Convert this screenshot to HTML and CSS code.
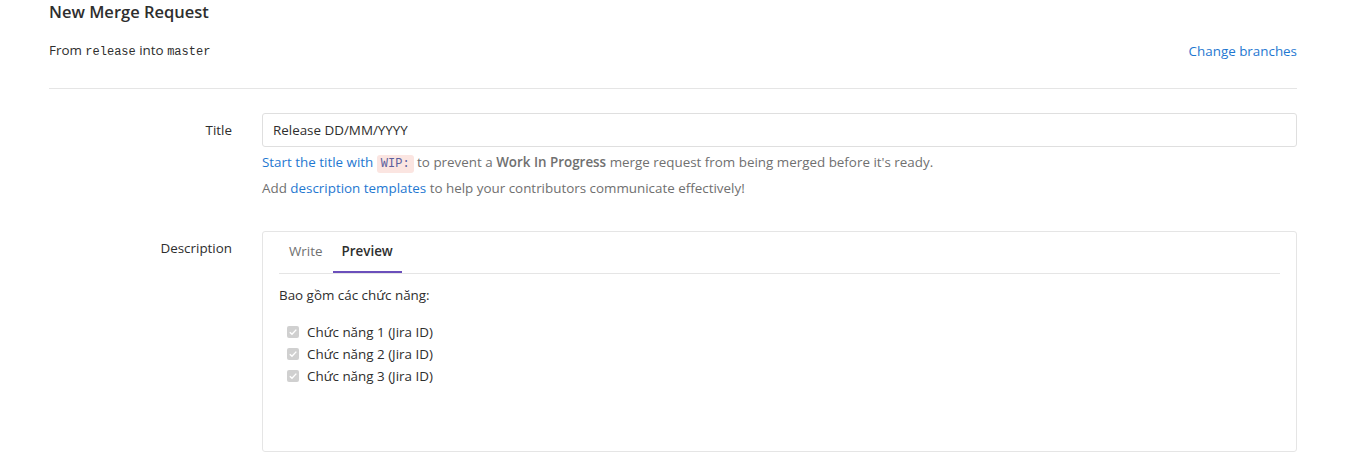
FILE: index.html
```html
<!DOCTYPE html>
<html>
<head>
<meta charset="utf-8">
<link rel="stylesheet" href="styles.css">
</head>
<body>
<div class="page">
  <h3 class="page-title">New Merge Request</h3>
  <div class="branch-row">
    <div class="branch-info">From <code class="ref">release</code> into <code class="ref">master</code></div>
    <a class="link" href="#">Change branches</a>
  </div>
  <hr class="divider">
  <div class="form-row">
    <label class="form-label">Title</label>
    <div class="form-field">
      <input class="input" type="text" value="Release DD/MM/YYYY">
      <p class="help help-first"><a class="link" href="#">Start the title with <code class="wip">WIP:</code></a> to prevent a <strong>Work In Progress</strong> merge request from being merged before it's ready.</p>
      <p class="help help-second">Add <a class="link" href="#">description templates</a> to help your contributors communicate effectively!</p>
    </div>
  </div>
  <div class="form-row desc-row">
    <label class="form-label">Description</label>
    <div class="form-field">
      <div class="md-box">
        <div class="tabs">
          <span class="tab">Write</span>
          <span class="tab active">Preview</span>
        </div>
        <div class="preview">
          <p class="para">Bao gồm các chức năng:</p>
          <ul class="tasks">
            <li class="task"><span class="cb"><svg width="12" height="12" viewBox="0 0 12 12"><path d="M2.8 6.2 L5 8.3 L9.3 3.6" fill="none" stroke="#fff" stroke-width="1.4"/></svg></span>Chức năng 1 (Jira ID)</li>
            <li class="task"><span class="cb"><svg width="12" height="12" viewBox="0 0 12 12"><path d="M2.8 6.2 L5 8.3 L9.3 3.6" fill="none" stroke="#fff" stroke-width="1.4"/></svg></span>Chức năng 2 (Jira ID)</li>
            <li class="task"><span class="cb"><svg width="12" height="12" viewBox="0 0 12 12"><path d="M2.8 6.2 L5 8.3 L9.3 3.6" fill="none" stroke="#fff" stroke-width="1.4"/></svg></span>Chức năng 3 (Jira ID)</li>
          </ul>
        </div>
      </div>
    </div>
  </div>
</div>
</body>
</html>
```
FILE: styles.css
```css
html, body {
  margin: 0;
  padding: 0;
  background: #fff;
}
body {
  font-family: "Open Sans", "Noto Sans", sans-serif;
  font-size: 13.4px;
  color: #2e2e2e;
}
.page {
  padding: 0 71px 0 49px;
}
.page-title {
  margin: 0;
  padding-top: 2px;
  font-size: 16.5px;
  font-weight: 600;
  line-height: 20px;
  color: #2e2e2e;
}
.branch-row {
  display: flex;
  justify-content: space-between;
  align-items: center;
  margin-top: 18px;
  line-height: 20px;
}
.ref {
  font-family: "Liberation Mono", monospace;
  font-size: 12px;
}
.link {
  color: #1f78d1;
  text-decoration: none;
}
.divider {
  border: 0;
  border-top: 1px solid #e5e5e5;
  margin: 26px 0 0;
}
.form-row {
  display: flex;
  margin-top: 24px;
}
.desc-row {
  margin-top: 33px;
}
.form-label {
  width: 183px;
  flex: none;
  text-align: right;
  padding-right: 30px;
  line-height: 34px;
}
.form-field {
  flex: 1;
}
.input {
  box-sizing: border-box;
  width: 100%;
  height: 34px;
  border: 1px solid #dfdfdf;
  border-radius: 3px;
  padding: 0 10px;
  font-family: "Open Sans", "Noto Sans", sans-serif;
  font-size: 13.4px;
  color: #2e2e2e;
  outline: none;
}
.help {
  margin: 0;
  color: #707070;
  line-height: 20px;
}
.help-first {
  margin-top: 5px;
}
.help-second {
  margin-top: 4px;
}
.help strong {
  font-weight: 600;
  color: #707070;
}
.wip {
  font-family: "Liberation Mono", monospace;
  font-size: 12px;
  background: #fbe5e1;
  color: #5b5f9e;
  padding: 2px 4px;
  border-radius: 3px;
}
.md-box {
  box-sizing: border-box;
  height: 221px;
  border: 1px solid #e5e5e5;
  border-radius: 3px;
  padding: 0 16px;
}
.tabs {
  display: flex;
  border-bottom: 1px solid #e5e5e5;
  padding-top: 8px;
}
.tab {
  padding: 1px 10px 12px;
  color: #707070;
  line-height: 20px;
}
.tab.active {
  color: #2e2e2e;
  font-weight: 600;
  padding: 1px 9px 12px;
  box-shadow: inset 0 -2px 0 #6b4fbb;
}
.preview {
  padding-top: 11px;
}
.para {
  margin: 0;
  line-height: 20px;
}
.tasks {
  list-style: none;
  margin: 16px 0 0;
  padding: 0 0 0 8px;
}
.task {
  display: flex;
  align-items: center;
  line-height: 22px;
}
.cb {
  width: 12px;
  height: 12px;
  background: #d0d0d0;
  border-radius: 2px;
  margin-right: 8px;
  display: flex;
}
```
